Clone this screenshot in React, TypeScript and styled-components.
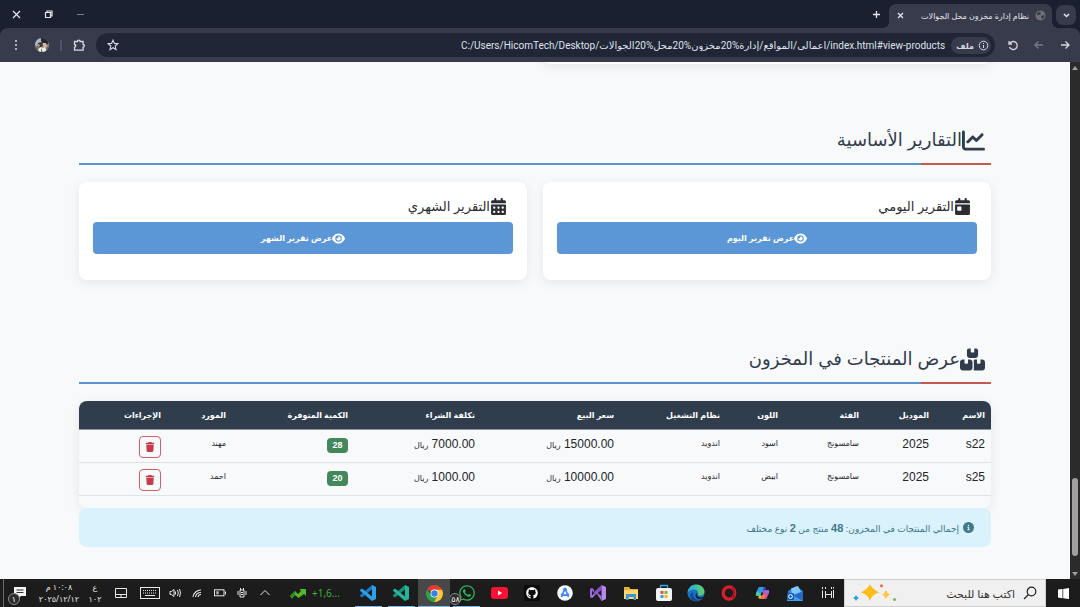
import React from "react";
import styled, { createGlobalStyle } from "styled-components";
import {
  FaChartLine,
  FaCalendarDay,
  FaCalendarDays,
  FaEye,
  FaBoxesStacked,
  FaTrash,
  FaCircleInfo,
  FaWhatsapp,
  FaGithub,
} from "react-icons/fa6";

const GlobalStyle = createGlobalStyle`
  *, *::before, *::after { box-sizing: border-box; }
  body {
    margin: 0;
    background: #f8f9fb;
    font-family: "Liberation Sans", "DejaVu Sans", sans-serif;
    color: #2b2f33;
  }
  button, input { font: inherit; color: inherit; }
  svg { display: block; flex: none; }
`;

const uiFont = `"Noto Sans", "Open Sans", "DejaVu Sans", sans-serif`;

const Screen = styled.div`
  display: flex;
  flex-direction: column;
  min-height: 100vh;
`;

/* ---------- browser frame ---------- */

const Frame = styled.header`
  background: #1b2030;
  font-family: ${uiFont};
`;

const TitleBar = styled.div`
  display: flex;
  align-items: flex-end;
  height: 28px;
  padding: 0 4px;
  color: #e3e5ec;
`;

const IconButton = styled.button<{ $w?: number; $h?: number; $dim?: boolean }>`
  display: flex;
  align-items: center;
  justify-content: center;
  flex: none;
  width: ${(p) => p.$w ?? 26}px;
  height: ${(p) => p.$h ?? 28}px;
  padding: 0;
  border: 0;
  background: none;
  color: ${(p) => (p.$dim ? "#777b8b" : "inherit")};
`;

const TabSearch = styled(IconButton)`
  margin-bottom: 3px;
  border-radius: 7px;
  background: #383b4b;
`;

const Tab = styled.div`
  position: relative;
  display: flex;
  align-items: center;
  gap: 6px;
  width: 163px;
  height: 24px;
  margin-right: 4px;
  padding: 0 6px 2px;
  border-radius: 7px 7px 0 0;
  background: #383b4b;
  font-size: 8px;
  &::before,
  &::after {
    content: "";
    position: absolute;
    bottom: 0;
    width: 6px;
    height: 6px;
  }
  &::before {
    right: 100%;
    background: radial-gradient(circle at 0 0, transparent 6px, #383b4b 6px);
  }
  &::after {
    left: 100%;
    background: radial-gradient(circle at 100% 0, transparent 6px, #383b4b 6px);
  }
`;

const TabTitle = styled.span`
  flex: 1;
  white-space: nowrap;
`;

const WindowControls = styled.div`
  display: flex;
  margin-right: auto;
  margin-left: -4px;
`;

const Toolbar = styled.div`
  display: flex;
  align-items: center;
  height: 34px;
  padding: 0 2px 0 3px;
  border-radius: 8px 8px 0 0;
  background: #383b4b;
  color: #d5d8e2;
`;

const AddressBar = styled.div`
  display: flex;
  align-items: center;
  flex: 1;
  height: 24px;
  margin: 0 5px 0 6px;
  padding: 0 4px;
  border-radius: 12px;
  background: #212636;
`;

const FileChip = styled.span`
  display: flex;
  align-items: center;
  gap: 4px;
  height: 17px;
  padding: 0 2px 0 5px;
  border-radius: 9px;
  background: #383b4b;
  font-size: 8px;
  font-weight: 600;
`;

const UrlInput = styled.input`
  flex: 1;
  min-width: 0;
  margin: 0 6px;
  padding: 0;
  border: 0;
  outline: 0;
  background: none;
  color: #dfe2ea;
  direction: ltr;
  text-align: right;
  font-family: Roboto, "DejaVu Sans", sans-serif;
  font-size: 10px;
`;

const Divider = styled.span`
  width: 2px;
  height: 11px;
  margin: 0 6px 0 5px;
  background: #50546a;
`;

/* ---------- page ---------- */

const Viewport = styled.div`
  display: flex;
  flex: 1;
`;

const ScrollTrack = styled.div`
  display: flex;
  flex-direction: column;
  align-items: center;
  justify-content: space-between;
  width: 10px;
  padding: 4px 0 3px;
  background: #2b2b2b;
`;

const ScrollThumb = styled.div`
  width: 6px;
  height: 78px;
  margin: auto 0 16px;
  border-radius: 3px;
  background: #9f9f9f;
`;

const Page = styled.main`
  flex: 1;
  min-width: 0;
  overflow: hidden;
`;

const Container = styled.div`
  max-width: 912px;
  margin: 0 auto;
`;

const CardGrid = styled.div`
  display: grid;
  grid-template-columns: 1fr 1fr;
  gap: 16px;
`;

const Card = styled.article`
  height: 98px;
  padding: 12px 14px;
  border-radius: 8px;
  background: #fff;
  box-shadow: 0 3px 12px rgba(0, 0, 0, 0.08);
`;

const CardTail = styled(Card)`
  margin-top: -96px;
`;

const Section = styled.section<{ $top: number }>`
  padding-top: ${(p) => p.$top}px;
`;

const SectionTitle = styled.h2`
  display: flex;
  align-items: center;
  height: 46px;
  margin: 0 0 17px;
  padding: 0 6px 2px;
  border-bottom: 2px solid;
  border-image: linear-gradient(to left, #c4594d 71px, #5a93cd 71px) 1;
  color: #303c4c;
  font-size: 18px;
  font-weight: 400;
`;

const CardTitle = styled.h3`
  display: flex;
  align-items: center;
  height: 24px;
  margin: 0 0 4px;
  padding: 0 6px;
  color: #2b2d30;
  font-size: 13px;
  font-weight: 400;
`;

const ReportButton = styled.button`
  display: flex;
  align-items: center;
  justify-content: center;
  width: 100%;
  height: 32px;
  border: 0;
  border-radius: 4px;
  background: #5b96d6;
  color: #fff;
  font-size: 8px;
  font-weight: 700;
`;

const TableBox = styled.div`
  height: 107px;
  overflow: hidden;
  border-radius: 8px;
  background: #f8f9fb;
  box-shadow: 0 3px 12px rgba(0, 0, 0, 0.08);
`;

const Table = styled.table`
  width: 100%;
  table-layout: fixed;
  border-spacing: 0;
`;

const Th = styled.th`
  height: 29px;
  padding: 0 6px;
  border-bottom: 1px solid #8d969f;
  background: #303d4d;
  color: #fff;
  font-size: 8px;
  font-weight: 700;
  text-align: right;
  white-space: nowrap;
`;

const Td = styled.td<{ $small?: boolean }>`
  height: 33px;
  padding: 6px 6px 0;
  border-bottom: 1px solid #dfe2e6;
  color: #222529;
  font-size: ${(p) => (p.$small ? 8 : 12)}px;
  line-height: 16px;
  vertical-align: top;
  white-space: nowrap;
`;

const Unit = styled.span`
  font-size: 8px;
`;

const Badge = styled.span`
  display: block;
  width: 21px;
  margin-top: 2px;
  border-radius: 4px;
  background: #44875a;
  color: #fff;
  font-size: 9px;
  font-weight: 700;
  line-height: 15px;
  text-align: center;
`;

const DeleteButton = styled.button`
  display: flex;
  align-items: center;
  justify-content: center;
  width: 22px;
  height: 22px;
  padding: 0;
  border: 1px solid #cf5f69;
  border-radius: 4px;
  background: none;
  color: #c73c4a;
`;

const Summary = styled.p`
  display: flex;
  align-items: center;
  gap: 4px;
  height: 39px;
  margin: 0 0 32px;
  padding: 0 17px;
  border-radius: 8px;
  background: #d9f2fb;
  color: #41788a;
  font-size: 9px;
`;

const Total = styled.b`
  font-size: 11px;
`;

/* ---------- taskbar ---------- */

const Taskbar = styled.footer`
  display: flex;
  height: 28px;
  background: #1c1c1c;
  color: #e8e8e8;
  font-family: ${uiFont};
`;

const SearchBox = styled.label`
  display: flex;
  align-items: center;
  width: 202px;
  padding: 0 8px;
  border: 1px solid #d0d0d0;
  background: #f0f0f0;
  color: #222;
`;

const SearchInput = styled.input`
  flex: 1;
  min-width: 0;
  padding: 0 8px;
  border: 0;
  outline: 0;
  background: none;
  font-size: 11px;
  &::placeholder { color: #333; opacity: 1; }
`;

const Apps = styled.nav`
  display: flex;
  width: 492px;
`;

const AppButton = styled.button<{ $open?: boolean; $active?: boolean }>`
  position: relative;
  display: flex;
  align-items: center;
  justify-content: center;
  flex: 1;
  padding: 0;
  border: 0;
  background: ${(p) => (p.$active ? "#484848" : "none")};
  &::after {
    content: "";
    position: absolute;
    right: ${(p) => (p.$active ? 0 : 3)}px;
    left: ${(p) => (p.$active ? 0 : 3)}px;
    bottom: 0;
    height: ${(p) => (p.$open ? 1 : 0)}px;
    background: #76b9ed;
  }
`;

const DarkTile = styled.span`
  padding: 2px;
  background: #0c0c0c;
`;

const Count = styled.span<{ $left: number }>`
  position: absolute;
  left: ${(p) => p.$left}px;
  bottom: 2px;
  width: 12px;
  height: 12px;
  border: 1px solid #8a8a8a;
  border-radius: 50%;
  background: #2c2c2c;
  color: #fff;
  font-size: 8px;
  line-height: 10px;
  text-align: center;
`;

const Tray = styled.div`
  display: flex;
  align-items: center;
  flex: 1;
  padding-right: 11px;
`;

const Ticker = styled.span`
  display: flex;
  align-items: center;
  gap: 6px;
  width: 65px;
  padding-left: 14px;
  direction: ltr;
  color: #3fae3f;
  font-size: 10px;
`;

const TrayButton = styled.button<{ $w: number }>`
  position: relative;
  display: flex;
  align-items: center;
  justify-content: center;
  width: ${(p) => p.$w}px;
  height: 28px;
  padding: 0;
  border: 0;
  background: none;
`;

const Stack = styled.span<{ $w: number }>`
  width: ${(p) => p.$w}px;
  font-size: 8px;
  line-height: 12px;
  text-align: center;
`;

const DateLine = styled.span`
  display: block;
  direction: ltr;
  white-space: nowrap;
`;

const DesktopPeek = styled.span`
  align-self: stretch;
  width: 4px;
  border-right: 1px solid #6a6a6a;
`;

/* ---------- drawings ---------- */

type LineProps = { d: string; s?: number; w?: number; children?: React.ReactNode };

const Line = ({ d, s = 12, w = 1, children }: LineProps) => (
  <svg width={s} height={s} viewBox={`0 0 ${s} ${s}`} fill="none" stroke="currentColor" strokeWidth={w}>
    <path d={d} />
    {children}
  </svg>
);

const Globe = () => (
  <svg width="11" height="11" viewBox="0 0 11 11">
    <circle cx="5.5" cy="5.5" r="5" fill="#6f7179" />
    <path d="M2 3l2-1.5L6 3 5 5H3L2 6zM6 6l3-1 .8 1.5L8 9 6.500 8.500z" fill="#3c3f4c" />
  </svg>
);

const Avatar = () => (
  <svg width="14" height="14" viewBox="0 0 14 14">
    <clipPath id="avatarClip"><circle cx="7" cy="7" r="7" /></clipPath>
    <g clipPath="url(#avatarClip)">
      <rect width="14" height="14" fill="#8d8f8c" />
      <path d="M0 3l4-3 3 1-1 4-3 3-3-1z" fill="#a9bccb" />
      <path d="M6 0h6l2 4-2 3-4-1-2-3z" fill="#262431" />
      <path d="M3 5l3-1 2 3-2 3-4-1z" fill="#3e3733" />
      <path d="M8 5h3l1 3-2 2-2-2z" fill="#d9b49a" />
      <path d="M2 7l2-1 1 2-2 1z" fill="#c9a48a" />
      <path d="M4 10l2-1 2 1 2-1 2 5H3z" fill="#ecece4" />
      <path d="M0 9l3 1v4H0zM11 10l3-2v5h-2z" fill="#6c6a4a" />
      <path d="M6.500 10l1 4h-1.500z" fill="#55574a" />
    </g>
  </svg>
);

const VsCode = ({ light, dark }: { light: string; dark: string }) => (
  <svg width="18" height="18" viewBox="0 0 18 18">
    <path d="M13 1v4.500L3 13.500l-2-1.500v-.8z" fill={dark} />
    <path d="M13 17v-4.500L3 4.500 1 6v.8z" fill={light} />
    <path d="M13 1l4 2v12l-4 2z" fill={light} />
  </svg>
);

const Chrome = () => (
  <svg width="17" height="17" viewBox="0 0 18 18">
    <path d="M9 9L1.200 4.500A9 9 0 0 1 16.800 4.500z" fill="#e33b2e" />
    <path d="M9 9V5h8a9 9 0 0 1-8.500 13z" fill="#fcc934" />
    <path d="M9 9l3.500 2L8.700 18A9 9 0 0 1 1.200 4.500L5.500 11z" fill="#2da14c" />
    <circle cx="9" cy="9" r="4.200" fill="#fff" />
    <circle cx="9" cy="9" r="3.400" fill="#3c7fe8" />
  </svg>
);

const YouTube = () => (
  <svg width="17" height="12" viewBox="0 0 17 12">
    <rect width="17" height="12" rx="3" fill="#fb0f32" />
    <path d="M7 3.500v5L11.200 6z" fill="#fff" />
  </svg>
);

const AndroidStudio = () => (
  <svg width="16" height="16" viewBox="0 0 16 16">
    <circle cx="8" cy="8" r="7.800" fill="#f5f9ff" />
    <path d="M8 3L4.500 12M8 3l3.500 9M4 9c2.500 1.500 5.500 1.500 8 0" fill="none" stroke="#3f83ee" strokeWidth="1.700" />
    <circle cx="8" cy="4.500" r="1.800" fill="#3f83ee" />
  </svg>
);

const VisualStudio = () => (
  <svg width="18" height="18" viewBox="0 0 18 18">
    <path d="M12.500 1L17 3v12l-4.500 2z" fill="#b888ec" />
    <path d="M12.500 1v4.800L3 14 1 13v-1z" fill="#8454c6" />
    <path d="M12.500 17v-4.800L3 4 1 5v8l2 1 2-1.500v-7z" fill="#9a6bdb" />
    <path d="M3 6.500v5L5.300 9z" fill="#1c1c1c" />
  </svg>
);

const Folder = () => (
  <svg width="16" height="14" viewBox="0 0 16 14">
    <path d="M1 1h5l1.500 2H15v10H1z" fill="#e9ae35" />
    <path d="M1 4h14v9H1z" fill="#fbd66d" />
    <path d="M3 14V8h10v6h-2.500v-3h-5v3z" fill="#3c94d8" />
  </svg>
);

const Store = () => (
  <svg width="18" height="18" viewBox="0 0 18 18">
    <path d="M5.500 5V1.500h7V5" fill="none" stroke="#39a4e6" strokeWidth="1.300" />
    <rect x="1" y="4" width="16" height="13" rx="2" fill="#f4f4f4" />
    <path d="M5.500 7h3v3h-3z" fill="#e9532f" />
    <path d="M9.500 7h3v3h-3z" fill="#7cb82f" />
    <path d="M5.500 11h3v3h-3z" fill="#2d9fe3" />
    <path d="M9.500 11h3v3h-3z" fill="#f5b81d" />
  </svg>
);

const Edge = () => (
  <svg width="18" height="18" viewBox="0 0 18 18">
    <defs>
      <linearGradient id="edgeTop" x1="0" x2="1" y1="0" y2="0">
        <stop offset="0" stopColor="#2aa9e0" />
        <stop offset="1" stopColor="#5fd267" />
      </linearGradient>
    </defs>
    <circle cx="9" cy="9" r="8.500" fill="#1874c9" />
    <path d="M.5 9C1 4 4.500.5 9 .5c5 0 8.500 3.500 8.500 7 0 2.800-2 4-4.500 4-1.800 0-2.500-.8-2-1.800C11.500 7 9.500 5.500 7 5.500 4 5.500 1.500 7 .5 9z" fill="url(#edgeTop)" />
    <path d="M6.500 8.500C5 12 8 16 12.500 15.500 8 19.500 2 15 3.500 10.500c.6-1.500 1.800-2.300 3-2z" fill="#134a93" />
    <path d="M17 12.500c-2.500 1.500-6 1.200-7-1.200-.5-1 .3-1.300.8-2.300-3 .5-3 4-.3 5.600 1.800 1 4.500.5 6.500-2.100z" fill="#1c1c1c" />
  </svg>
);

const Opera = () => (
  <svg width="16" height="16" viewBox="0 0 16 16">
    <ellipse cx="8" cy="8" rx="5.800" ry="6.200" fill="none" stroke="#d91e2c" strokeWidth="3.200" />
    <path d="M11 2.500c3 2.500 3 8.500 0 11" fill="none" stroke="#a3121d" strokeWidth="1.500" />
  </svg>
);

const Copilot = () => (
  <svg width="15" height="14" viewBox="0 0 15 14">
    <path d="M5 1h4.500L7 8.500C6.500 10 5.500 10 4 10H2C.5 10 .8 8 1.200 7L3 2.500C3.400 1.500 4 1 5 1z" fill="#2f9bea" />
    <path d="M1.200 7L2 5l4 3.500C5.500 10 5 10 4 10H2C.5 10 .8 8 1.200 7z" fill="#57c98a" />
    <path d="M4 10h3l-.5 2c-.4 1-3 1-3.300-.5z" fill="#f3b53c" />
    <path d="M8.500 1c2 0 2.200 1 2.600 2.500H8z" fill="#3452d6" />
    <path d="M10 13H5.500L8 5.500C8.500 4 9.500 4 11 4h2c1.500 0 1.200 2 .8 3L12 11.500c-.4 1-1 1.500-2 1.500z" fill="#d2559c" />
    <path d="M11 4h2c1.500 0 1.200 2 .8 3L13 9 8.500 5c.4-1 1.200-1 2.500-1z" fill="#a45fe0" />
    <path d="M5.500 13L7 8.500l4 0L9 13z" fill="#f0743e" />
    <path d="M6.500 6.500h1.800l-.8 2.500H5.800z" fill="#1c1c1c" />
  </svg>
);

const Mail = () => (
  <svg width="18" height="17" viewBox="0 0 18 17">
    <path d="M2 6l8-5 7 5v10H2z" fill="#2f82dd" />
    <path d="M5 3.500l7-2.500 3 6-9 3z" fill="#7fc8f7" />
    <path d="M1 9l8 2.500L17 6v10H1z" fill="#3f9df0" />
    <path d="M8 11l9-5v10z" fill="#2468c4" />
    <rect x="1" y="8" width="7" height="7" rx="1.500" fill="#1459ae" />
    <circle cx="4.500" cy="11.500" r="1.900" fill="none" stroke="#fff" />
  </svg>
);

const TaskView = () => (
  <Line d="M1.500 1v2M1.500 4.500V12M4.500 1v2M4.500 5v7M4.500 8.500h6M10.500 1v2M10.500 5v7M12.500 1v1.500M12.500 4v8" s={14} />
);

const WindowsLogo = () => (
  <svg width="11" height="11" viewBox="0 0 11 11" fill="#fff">
    <path d="M0 1.500L4.500 1v9.200L0 9.500zM5.200.9L11 0v11l-5.800-.8z" />
  </svg>
);

const Sparkles = () => (
  <svg width="44" height="18" viewBox="0 0 44 18">
    <path d="M17 0q1.500 4.500 9 8.500-7.500 2-9 8.500-1.500-6.500-9-8.500Q15.500 4.500 17 0z" fill="#fcbd19" />
    <path d="M33 6q.8 3 4 4.500-3.200 1-4 4.500-.8-3.500-4-4.500 3.200-1.500 4-4.500z" fill="#fcc53b" />
    <path d="M3 11q.6 2 3 3-2.400.8-3 3-.6-2.200-3-3 2.400-1 3-3z" fill="#269fdf" />
    <circle cx="28.500" cy="1.800" r="1.600" fill="#e8714a" />
    <circle cx="41.500" cy="15.500" r="1.600" fill="#7fb763" />
  </svg>
);

const TrendUp = () => (
  <svg width="16" height="11" viewBox="0 0 16 11">
    <path d="M0 8l5-5 3 3 3-3L9.500 1H16v7l-2-2-5.500 4L5 7l-3 3.500z" fill="#54b62a" />
    <path d="M0 8l5-5v4l-3 3.500z" fill="#2f8d1d" />
  </svg>
);

const Keyboard = () => (
  <svg width="20" height="12" viewBox="0 0 20 12" fill="none" stroke="currentColor">
    <rect x=".5" y=".5" width="19" height="11" />
    <path d="M3 3.500h14M3 6h14" strokeDasharray="1 1" />
    <path d="M5 8.500h10" />
  </svg>
);

const Battery = () => (
  <svg width="12" height="8" viewBox="0 0 12 8" fill="none" stroke="currentColor">
    <rect x=".5" y=".8" width="9.500" height="6" />
    <path d="M11.500 2.500v3" />
    <path d="M3 2.300v3M4 2.300v3" />
  </svg>
);

/* ---------- data ---------- */

const columns: [string, number][] = [
  ["الاسم", 56],
  ["الموديل", 70],
  ["الفئة", 81],
  ["اللون", 58],
  ["نظام التشغيل", 106],
  ["سعر البيع", 139],
  ["تكلفة الشراء", 127],
  ["الكمية المتوفرة", 122],
  ["المورد", 65],
  ["الإجراءات", 88],
];

const products = [
  { name: "s22", model: "2025", kind: "سامسونج", color: "اسود", os: "اندويد", price: "15000.00", cost: "7000.00", qty: 28, supplier: "مهند" },
  { name: "s25", model: "2025", kind: "سامسونج", color: "ابيض", os: "اندويد", price: "10000.00", cost: "1000.00", qty: 20, supplier: "احمد" },
];

const apps: { label: string; icon: React.ReactNode; open?: boolean; active?: boolean; count?: string }[] = [
  { label: "عرض المهام", icon: <TaskView /> },
  { label: "البريد", icon: <Mail /> },
  { label: "Copilot", icon: <Copilot /> },
  { label: "Opera", icon: <Opera /> },
  { label: "Edge", icon: <Edge /> },
  { label: "Store", icon: <Store /> },
  { label: "الملفات", icon: <Folder /> },
  { label: "Visual Studio", icon: <VisualStudio /> },
  { label: "Android Studio", icon: <AndroidStudio /> },
  { label: "GitHub", icon: <DarkTile><FaGithub size={12} color="#fff" /></DarkTile> },
  { label: "YouTube", icon: <YouTube /> },
  { label: "WhatsApp", icon: <FaWhatsapp size={18} color="#2fb45a" />, open: true, count: "٥٨" },
  { label: "Chrome", icon: <Chrome />, open: true, active: true },
  { label: "VS Code Insiders", icon: <VsCode light="#25b59a" dark="#16937c" />, open: true },
  { label: "VS Code", icon: <VsCode light="#2f9fe8" dark="#1478c4" />, open: true },
];

const BrowserFrame = () => (
  <Frame>
    <TitleBar>
      <TabSearch $w={20} $h={20} aria-label="بحث في علامات التبويب">
        <Line d="M3 4l2.500 2.500L8 4" s={11} w={1.5} />
      </TabSearch>
      <Tab>
        <Globe />
        <TabTitle>نظام إدارة مخزون محل الجوالات</TabTitle>
        <IconButton $w={11} $h={20} aria-label="إغلاق علامة التبويب">
          <Line d="M3 3l5 5M8 3l-5 5" s={11} w={1.3} />
        </IconButton>
      </Tab>
      <IconButton aria-label="علامة تبويب جديدة">
        <Line d="M5.500 2v7M2 5.500h7" s={11} w={1.3} />
      </IconButton>
      <WindowControls>
        <IconButton $w={32} $dim aria-label="تصغير"><Line d="M2 5.500h7" s={11} /></IconButton>
        <IconButton $w={32} aria-label="استعادة">
          <Line d="M2.500 3.500h5v5h-5zM4 3.500V2h5v5H7.500" s={11} w={1.2} />
        </IconButton>
        <IconButton $w={32} aria-label="إغلاق"><Line d="M2 2l7 7M9 2l-7 7" s={11} w={1.2} /></IconButton>
      </WindowControls>
    </TitleBar>
    <Toolbar>
      <IconButton aria-label="رجوع"><Line d="M2 6h8M6.500 2.500L10 6 6.500 9.500" w={1.3} /></IconButton>
      <IconButton $dim aria-label="تقدم"><Line d="M10 6H2M5.500 2.500L2 6l3.500 3.500" w={1.3} /></IconButton>
      <IconButton aria-label="إعادة تحميل">
        <Line d="M2 2v3h3M2.500 5A4 4 0 1 1 2.500 8" w={1.3} />
      </IconButton>
      <AddressBar>
        <FileChip>
          <Line d="M5.500 5v3M5.500 3v1" s={11} w={1}><circle cx="5.500" cy="5.500" r="4.300" /></Line>
          ملف
        </FileChip>
        <UrlInput
          aria-label="العنوان"
          readOnly
          value="C:/Users/HicomTech/Desktop/اعمالي/المواقع/إدارة%20مخزون%20محل%20الجوالات/index.html#view-products"
        />
        <IconButton $w={26} $h={24} aria-label="إضافة إشارة">
          <Line d="M6 1.200l1.400 3.200 3.500.3-2.700 2.300.8 3.500L6 8.700l-3 1.800.8-3.500L1.100 4.700l3.500-.3z" w={1.1} />
        </IconButton>
      </AddressBar>
      <IconButton $w={22} aria-label="الإضافات">
        <Line d="M1.500 2.500h3a1.300 1.300 0 0 1 2.600 0h3v3a1.300 1.300 0 0 1 0 2.600v3H1.500v-3a1.300 1.300 0 0 0 0-2.600z" s={13} w={1.3} />
      </IconButton>
      <Divider />
      <IconButton aria-label="الملف الشخصي"><Avatar /></IconButton>
      <IconButton aria-label="القائمة">
        <svg width="4" height="12" viewBox="0 0 4 12" fill="currentColor">
          <circle cx="2" cy="2" r="1" /><circle cx="2" cy="6" r="1" /><circle cx="2" cy="10" r="1" />
        </svg>
      </IconButton>
    </Toolbar>
  </Frame>
);

const WindowsTaskbar = () => (
  <Taskbar>
    <TrayButton $w={34} aria-label="ابدأ"><WindowsLogo /></TrayButton>
    <SearchBox>
      <Line d="M5.500 8.500L1 13" s={14} w={1.2}><circle cx="8.500" cy="5.500" r="4.300" /></Line>
      <SearchInput aria-label="بحث" placeholder="اكتب هنا للبحث" />
      <Sparkles />
    </SearchBox>
    <Apps>
      {apps.map((a) => (
        <AppButton key={a.label} aria-label={a.label} $open={a.open} $active={a.active}>
          {a.icon}
          {a.count && <Count $left={-1}>{a.count}</Count>}
        </AppButton>
      ))}
    </Apps>
    <Tray>
      <Ticker><TrendUp />+1,6...</Ticker>
      <TrayButton $w={23} aria-label="إظهار المخفي"><Line d="M1.500 8L6 3.500 10.500 8" /></TrayButton>
      <TrayButton $w={22} aria-label="الطاقة">
        <Line d="M4 3h4v7H4zM4.500 1v2M7.500 1v2M2 4v4M10 4v4M5 5.500h2M5 7.500h2" />
      </TrayButton>
      <TrayButton $w={23} aria-label="البطارية"><Battery /></TrayButton>
      <TrayButton $w={22} aria-label="الشبكة">
        <Line d="M2 10a8 8 0 0 1 8-7M4.500 10A5.500 5.500 0 0 1 10 5.500M7 10a3 3 0 0 1 3-2.500" w={1.1} />
      </TrayButton>
      <TrayButton $w={22} aria-label="الصوت">
        <Line d="M1 4.500h1.500L5 2.500v7L2.500 7.500H1zM6.500 4.500v3M8.500 3q1.500 3 0 6M10.500 2q2 4 0 8" />
      </TrayButton>
      <TrayButton $w={28} aria-label="لوحة المفاتيح"><Keyboard /></TrayButton>
      <TrayButton $w={30} aria-label="لوحة اللمس">
        <Line d="M.5 1.500h11v9H.5zM.5 7.500h11M6 7.500v3" />
      </TrayButton>
      <Stack $w={22}>ع<DateLine>١٠٢</DateLine></Stack>
      <Stack $w={50}>١٠:٠٨ م<DateLine>٢٠٢٥/١٢/١٢</DateLine></Stack>
      <TrayButton $w={30} aria-label="الإشعارات">
        <svg width="13" height="12" viewBox="0 0 13 12">
          <path d="M1 0h12v9H8l-3 3V9H1z" fill="#f4f4f4" />
          <path d="M3.500 3h7M3.500 5.500h7" stroke="#333" />
        </svg>
        <Count $left={4}>١</Count>
      </TrayButton>
      <DesktopPeek />
    </Tray>
  </Taskbar>
);

export default function App() {
  return (
    <Screen dir="rtl">
      <GlobalStyle />
      <BrowserFrame />
      <Viewport>
        <ScrollTrack>
          <svg width="6" height="4" viewBox="0 0 6 4"><path d="M0 4l3-4 3 4z" fill="#9f9f9f" /></svg>
          <ScrollThumb />
          <svg width="6" height="4" viewBox="0 0 6 4"><path d="M0 0l3 4 3-4z" fill="#9f9f9f" /></svg>
        </ScrollTrack>
        <Page>
          <Container>
            <CardGrid><CardTail /></CardGrid>

            <Section $top={55}>
              <SectionTitle><FaChartLine size={23} />التقارير الأساسية</SectionTitle>
              <CardGrid>
                <Card>
                  <CardTitle><FaCalendarDay size={17} />التقرير اليومي</CardTitle>
                  <ReportButton><FaEye size={13} />عرض تقرير اليوم</ReportButton>
                </Card>
                <Card>
                  <CardTitle><FaCalendarDays size={17} />التقرير الشهري</CardTitle>
                  <ReportButton><FaEye size={13} />عرض تقرير الشهر</ReportButton>
                </Card>
              </CardGrid>
            </Section>

            <Section $top={58}>
              <SectionTitle><FaBoxesStacked size={25} />عرض المنتجات في المخزون</SectionTitle>
              <TableBox>
                <Table>
                  <colgroup>
                    {columns.map(([label, width]) => <col key={label} width={width} />)}
                  </colgroup>
                  <thead>
                    <tr>{columns.map(([label]) => <Th key={label} scope="col">{label}</Th>)}</tr>
                  </thead>
                  <tbody>
                    {products.map((p) => (
                      <tr key={p.name}>
                        <Td>{p.name}</Td>
                        <Td>{p.model}</Td>
                        <Td $small>{p.kind}</Td>
                        <Td $small>{p.color}</Td>
                        <Td $small>{p.os}</Td>
                        <Td>{p.price} <Unit>ريال</Unit></Td>
                        <Td>{p.cost} <Unit>ريال</Unit></Td>
                        <Td><Badge>{p.qty}</Badge></Td>
                        <Td $small>{p.supplier}</Td>
                        <Td>
                          <DeleteButton aria-label={`حذف ${p.name}`}><FaTrash size={10} /></DeleteButton>
                        </Td>
                      </tr>
                    ))}
                  </tbody>
                </Table>
              </TableBox>
              <Summary>
                <FaCircleInfo size={11} />
                <span>إجمالي المنتجات في المخزون: <Total>48</Total> منتج من <Total>2</Total> نوع مختلف</span>
              </Summary>
            </Section>
          </Container>
        </Page>
      </Viewport>
      <WindowsTaskbar />
    </Screen>
  );
}
